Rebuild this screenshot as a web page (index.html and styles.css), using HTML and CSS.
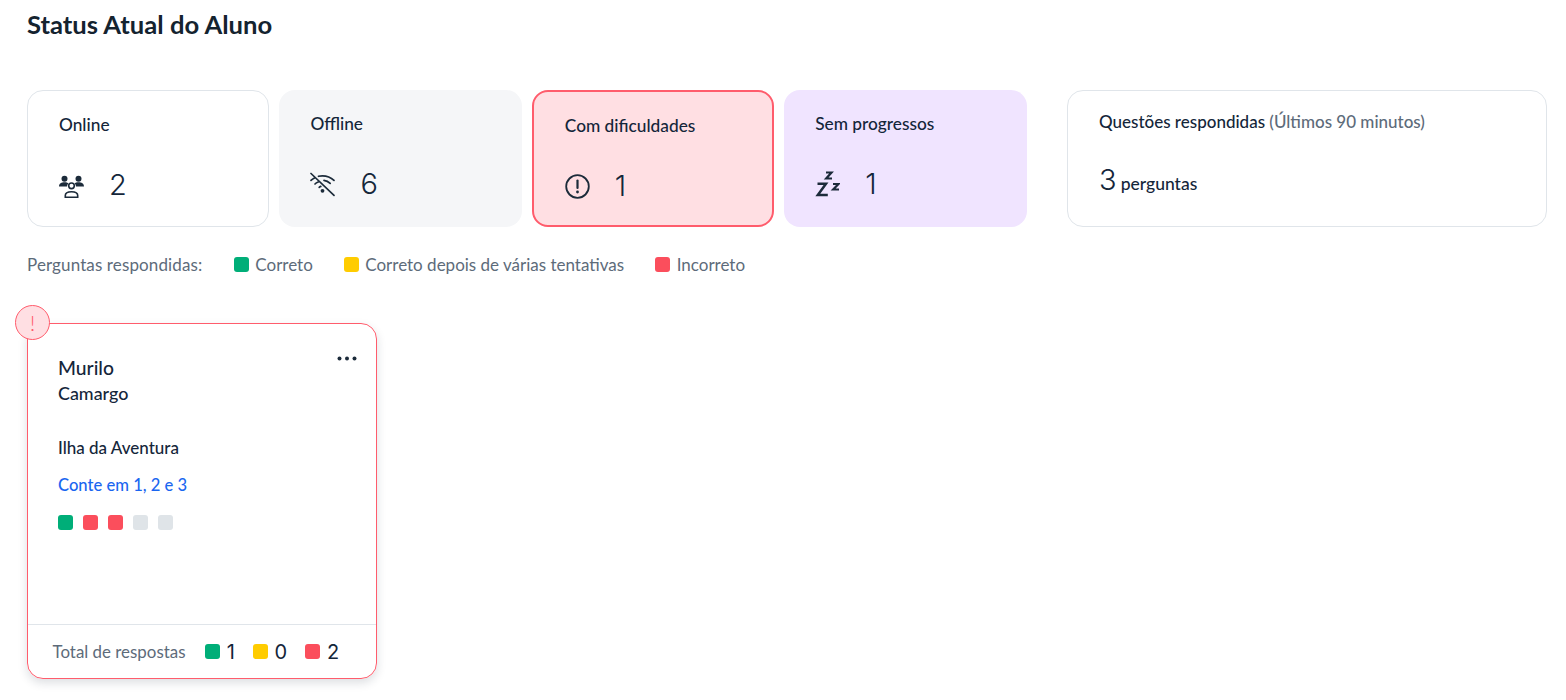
FILE: index.html
```html
<!DOCTYPE html>
<html lang="pt-BR">
<head>
<meta charset="utf-8">
<title>Status Atual do Aluno</title>
<link rel="stylesheet" href="styles.css">
</head>
<body>
<main class="page">
  <h1 class="title">Status Atual do Aluno</h1>
  <section class="summary">
    <div class="stats">
      <div class="stat stat-online">
        <div class="stat-label">Online</div>
        <div class="stat-value">
          <svg class="stat-icon" viewBox="0 0 25 25"><g fill="#1c2b3a"><circle cx="5.500" cy="5.800" r="3"/><circle cx="19.500" cy="5.800" r="3"/><path d="M0 13.500c0-3 2.500-4.300 5.500-4.300 1.700 0 3.200.5 4.100 1.300-1 .7-1.500 1.800-1.500 3z"/><path d="M25 13.500c0-3-2.500-4.300-5.500-4.300-1.700 0-3.200.5-4.100 1.300 1 .7 1.500 1.800 1.500 3z"/></g><circle cx="12.500" cy="12.800" r="2.800" fill="#fff" stroke="#1c2b3a" stroke-width="1.600"/><path d="M6.300 24.200v-1.700c0-2.500 2.800-3.700 6.200-3.700s6.200 1.200 6.200 3.700v1.700z" fill="#fff" stroke="#1c2b3a" stroke-width="1.600"/></svg>
          <span class="count">2</span>
        </div>
      </div>
      <div class="stat stat-offline">
        <div class="stat-label">Offline</div>
        <div class="stat-value">
          <svg class="stat-icon" viewBox="0 0 25 25" fill="none" stroke="#1c2b3a" stroke-width="1.700" stroke-linecap="round"><path d="M8.500 4.300c1.300-.4 2.600-.5 4-.5 4.500 0 8.500 1.700 11.500 4.500"/><path d="M1 8.300c1-1 2.200-1.800 3.500-2.400"/><path d="M5 12c.9-.9 2-1.500 3.200-2"/><path d="M14 8.300c2.400.3 4.500 1.400 6.200 3"/><path d="M9.200 15.300c.4-.4 1-.7 1.600-.9"/><path d="M1 1.500l23 21.800"/><circle cx="12.500" cy="18.800" r="1.900" fill="#1c2b3a" stroke="none"/></svg>
          <span class="count">6</span>
        </div>
      </div>
      <div class="stat stat-trouble">
        <div class="stat-label">Com dificuldades</div>
        <div class="stat-value">
          <svg class="stat-icon" viewBox="0 0 25 25" fill="none"><circle cx="12.500" cy="12.500" r="11.300" stroke="#1c2b3a" stroke-width="1.800"/><path d="M12.500 6.500v7.500" stroke="#1c2b3a" stroke-width="2.200" stroke-linecap="round"/><circle cx="12.500" cy="18" r="1.400" fill="#1c2b3a"/></svg>
          <span class="count">1</span>
        </div>
      </div>
      <div class="stat stat-idle">
        <div class="stat-label">Sem progressos</div>
        <div class="stat-value">
          <svg class="stat-icon icon-z" viewBox="0 0 25 26" fill="none" stroke="#1c2b3a"><path d="M2.500 12.700h8.500L2.800 24H12.800" stroke-width="2.500"/><path d="M11 1.500h5.500l-5.300 6H17" stroke-width="2.200"/><path d="M18 13h5.500l-5.300 5.500H24" stroke-width="2.200"/></svg>
          <span class="count">1</span>
        </div>
      </div>
    </div>
    <div class="answered">
      <div class="answered-label">Questões respondidas <span class="muted">(Últimos 90 minutos)</span></div>
      <div class="answered-value"><span class="count">3</span> <span class="unit">perguntas</span></div>
    </div>
  </section>

  <div class="legend">
    <span class="legend-title">Perguntas respondidas:</span>
    <span class="legend-item"><i class="sq green"></i>Correto</span>
    <span class="legend-item"><i class="sq yellow"></i>Correto depois de várias tentativas</span>
    <span class="legend-item"><i class="sq red"></i>Incorreto</span>
  </div>

  <article class="student">
    <span class="alert-badge">!</span>
    <div class="student-body">
      <div class="student-head">
        <div class="student-first">Murilo</div>
        <svg class="more" viewBox="0 0 20 5"><circle cx="2.500" cy="2.500" r="2" fill="#1c2b3a"/><circle cx="10" cy="2.500" r="2" fill="#1c2b3a"/><circle cx="17.500" cy="2.500" r="2" fill="#1c2b3a"/></svg>
      </div>
      <div class="student-last">Camargo</div>
      <div class="student-world">Ilha da Aventura</div>
      <div class="student-lesson">Conte em 1, 2 e 3</div>
      <div class="student-progress">
        <i class="sq green"></i><i class="sq red"></i><i class="sq red"></i><i class="sq grey"></i><i class="sq grey"></i>
      </div>
    </div>
    <div class="student-foot">
      <span class="foot-label">Total de respostas</span>
      <span class="foot-item"><i class="sq green"></i><span class="foot-num">1</span></span>
      <span class="foot-item"><i class="sq yellow"></i><span class="foot-num">0</span></span>
      <span class="foot-item"><i class="sq red"></i><span class="foot-num">2</span></span>
    </div>
  </article>
</main>
</body>
</html>
```

FILE: styles.css
```css
* { box-sizing: border-box; }
html, body { margin: 0; height: 100%; overflow: hidden; }
body {
  background: #fff;
  color: #14263a;
  font-family: "Lato", "Noto Sans", sans-serif;
}
.page { padding: 8px 19px 0 27px; }
.title {
  margin: 0;
  font-size: 25.6px;
  line-height: 32px;
  font-weight: 700;
  color: #14232f;
}
.summary {
  display: flex;
  justify-content: space-between;
  margin-top: 50px;
  height: 137px;
}
.stats {
  display: grid;
  grid-template-columns: repeat(4, 1fr);
  gap: 10px;
  width: 999.6px;
}
.stat {
  border-radius: 16px;
  padding: 24px 31px 0;
}
.stat-online { border: 1px solid #e0e5ea; }
.stat-offline { background: #f5f6f8; }
.stat-trouble { background: #ffdfe3; border: 2px solid #ff5c6c; }
.stat-idle { background: #f0e4ff; }
.stat-label { font-size: 17.3px; line-height: 20px; font-weight: 500; }
.stat-value {
  display: flex;
  align-items: center;
  gap: 25px;
  margin-top: 32px;
}
.stat-icon { width: 25px; height: 25px; flex: none; }
.icon-z { height: 26px; }
.count {
  font-family: "Inter", "Lato", sans-serif;
  font-size: 29px;
  line-height: 36px;
  font-weight: 300;
}
.answered {
  width: 480px;
  border: 1px solid #e0e5ea;
  border-radius: 16px;
  padding: 21px 31px 0;
}
.answered-label { font-size: 17px; line-height: 20px; font-weight: 500; }
.muted { color: #5d6b7a; }
.answered-value { margin-top: 30px; line-height: 36px; }
.unit { font-size: 17.5px; font-weight: 500; }
.legend {
  display: flex;
  align-items: center;
  margin-top: 28px;
  height: 18px;
  font-size: 17px;
  color: #5d6b7a;
}
.legend-title { margin-right: 31.5px; letter-spacing: .12px; }
.legend-item { display: flex; align-items: center; gap: 6.5px; margin-right: 31px; }
.sq {
  display: block;
  width: 15px;
  height: 15px;
  border-radius: 3px;
  flex: none;
}
.green { background: #00ae78; }
.yellow { background: #ffcc00; }
.red { background: #fb4e5c; }
.grey { background: #dfe4e8; }
.student {
  position: relative;
  display: flex;
  flex-direction: column;
  width: 350px;
  height: 356px;
  margin-top: 50px;
  border: 1px solid #ff5c6c;
  border-radius: 16px;
  box-shadow: 0 4px 10px rgba(28, 43, 58, 0.15);
}
.alert-badge {
  position: absolute;
  left: -13px;
  top: -19px;
  width: 35px;
  height: 35px;
  border: 1px solid #ff5c6c;
  border-radius: 50%;
  background: #ffdfe3;
  color: #ff5c6c;
  font-size: 22px;
  font-weight: 300;
  line-height: 33px;
  text-align: center;
}
.student-body { flex: 1; padding: 31px 19px 0 30px; }
.student-head { display: flex; justify-content: space-between; align-items: flex-start; }
.student-first { font-size: 19.3px; line-height: 26px; font-weight: 500; }
.more { width: 20px; height: 5px; margin-top: 1px; }
.student-last { margin-top: 2px; font-size: 17.9px; line-height: 20px; font-weight: 500; }
.student-world { margin-top: 35px; font-size: 17px; line-height: 20px; font-weight: 500; }
.student-lesson { margin-top: 17px; font-size: 16.6px; line-height: 20px; color: #1a66f0; font-weight: 500; }
.student-progress { display: flex; gap: 10px; margin-top: 20px; }
.student-foot {
  display: flex;
  align-items: center;
  height: 54px;
  padding-left: 24.5px;
  border-top: 1px solid #e0e5ea;
}
.foot-label { font-size: 16.9px; color: #5d6b7a; margin-right: 19.8px; }
.foot-item { display: flex; align-items: center; gap: 6.5px; margin-right: 18.2px; }
.foot-num { font-family: "Inter", "Lato", sans-serif; font-size: 20px; font-weight: 400; }
```
